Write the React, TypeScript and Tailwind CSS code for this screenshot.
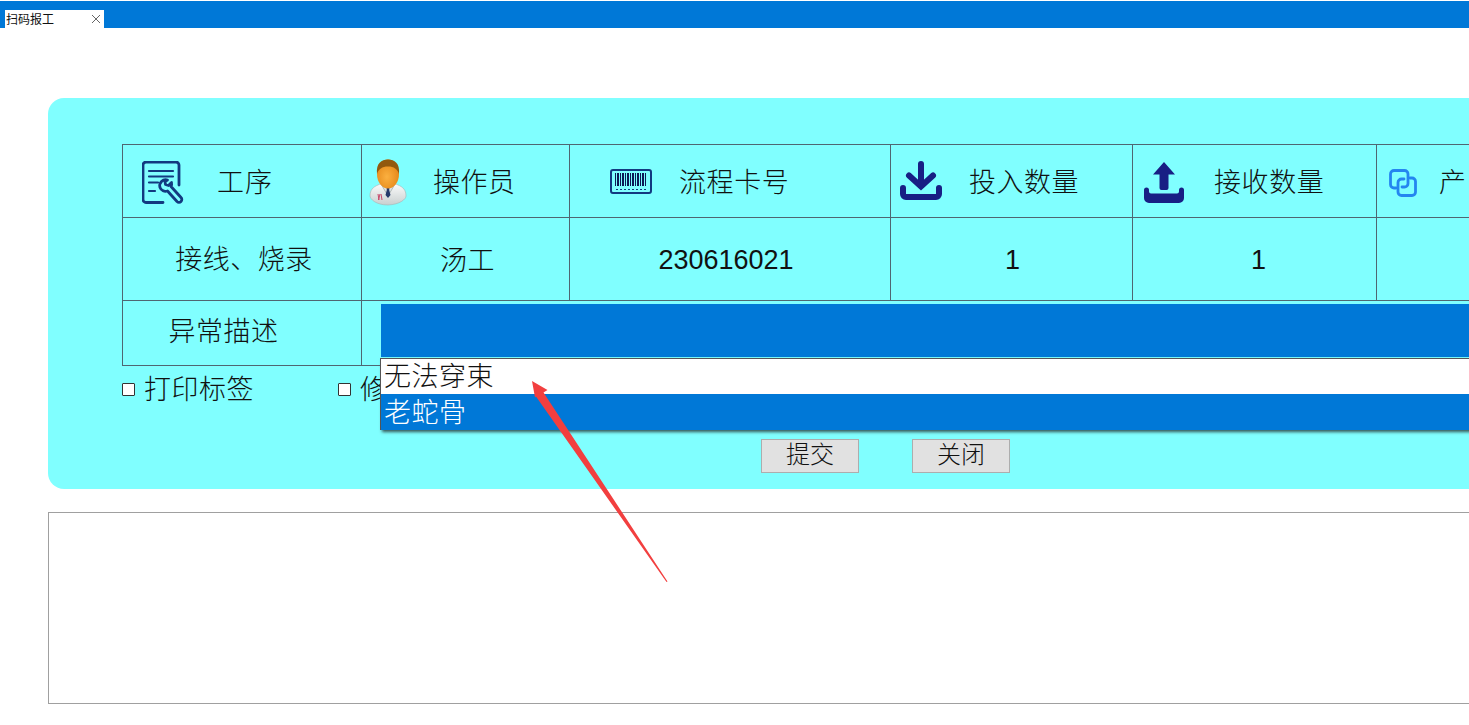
const cjk = "font-['Noto_Sans_CJK_SC','Liberation_Sans',sans-serif]";

function WrenchDocIcon() {
  return (
    <svg width="42" height="44" viewBox="0 0 42 44" fill="none" stroke="#123a80" strokeWidth="2.800" strokeLinecap="round" strokeLinejoin="round">
      <path d="M21 41.500H4a3 3 0 0 1-3-3V4a3 3 0 0 1 3-3h30a3 3 0 0 1 3 3v20" />
      <path d="M7 10h24M7 15.500h24M7 21.500h9M7 30h6" strokeWidth="2.200" />
      <path d="M25.500 19a6 6 0 0 0-7.500 7.500 6 6 0 0 0 7.500 3.500L35 40.500a2.800 2.800 0 0 0 4-4L29 25.500a6 6 0 0 0 .5-4l-3 3-3-1-.5-3z" />
    </svg>
  );
}

function DoctorIcon() {
  return (
    <svg width="40" height="47" viewBox="0 0 40 47">
      <defs>
        <radialGradient id="skin" cx="0.45" cy="0.6" r="0.7">
          <stop offset="0" stopColor="#fbb040" />
          <stop offset="1" stopColor="#e07f10" />
        </radialGradient>
        <linearGradient id="coat" x1="0" y1="0" x2="0" y2="1">
          <stop offset="0" stopColor="#ffffff" />
          <stop offset="1" stopColor="#c9cfcf" />
        </linearGradient>
      </defs>
      <path d="M2 37c0-6 3-9 8-11l6-3h8l6 3c5 2 8 5 8 11 0 3-6 8.500-18 9C8 46 2 40 2 37z" fill="url(#coat)" stroke="#a9b1b1" strokeWidth="0.600" />
      <path d="M13 25l7 12 7-12-7-2z" fill="#dfe5e5" stroke="#8b9696" strokeWidth="0.600" />
      <path d="M18.500 28h3l-.3 3 1.300 5-2.500 3-2.500-3 1.300-5z" fill="#253a6b" />
      <path d="M10 35l1 6M12 35l-1.500 6M13 35l1 6" stroke="#c8486a" strokeWidth="1" />
      <ellipse cx="20" cy="15" rx="11" ry="14.500" fill="url(#skin)" />
      <path d="M9 15C8 4 13.500 .5 20 .5S32 4 31 15C29.500 10 26 7.500 20 7.500S10.500 10 9 15z" fill="#92590f" />
    </svg>
  );
}

function BarcodeIcon() {
  const bars = [0, 2, 3, 5, 7, 8, 10, 12, 13, 15, 17, 18, 20, 22, 23, 25, 27, 28, 30];
  return (
    <svg width="42" height="25" viewBox="0 0 42 25" fill="none" shapeRendering="crispEdges">
      <rect x="1" y="1" width="40" height="23" rx="2" stroke="#123a80" strokeWidth="2" shapeRendering="auto" />
      {bars.map((x) => (
        <rect key={x} x={5 + x} y="4" width="1" height="13" fill="#0d1a55" />
      ))}
      <path d="M6 20h30" stroke="#123a80" strokeWidth="1" strokeDasharray="2 2" />
    </svg>
  );
}

function DownloadIcon() {
  return (
    <svg width="42" height="40" viewBox="0 0 42 40" fill="none" stroke="#181f84" strokeLinecap="round">
      <path d="M21 3v22M9 14.500l12 11 12-11" strokeWidth="6" strokeLinejoin="miter" />
      <path d="M3 27v6a3 3 0 0 0 3 3h30a3 3 0 0 0 3-3v-6" strokeWidth="6" />
    </svg>
  );
}

function UploadIcon() {
  return (
    <svg width="40" height="41" viewBox="0 0 40 41" fill="#181f84">
      <path d="M20 0l11 12.500h-6.500V26a2 2 0 0 1-2 2h-5a2 2 0 0 1-2-2V12.500H9z" />
      <path d="M0 28a2.500 2.500 0 0 1 5 0l0 1.500q0 2 2 2h26q2 0 2-2V28a2.500 2.500 0 0 1 5 0v8a5 5 0 0 1-5 5H5a5 5 0 0 1-5-5z" />
    </svg>
  );
}

function LinkSquaresIcon() {
  return (
    <svg width="28" height="28" viewBox="0 0 28 28" fill="none" stroke="#2486f0" strokeWidth="2.800" strokeLinecap="round" strokeLinejoin="round">
      <path d="M7 19H5a3.500 3.500 0 0 1-3.500-3.500V5A3.500 3.500 0 0 1 5 1.500h10.500A3.500 3.500 0 0 1 19 5v9.500a3.500 3.500 0 0 1-3.500 3.500h-2.500" />
      <path d="M21 9h2a3.500 3.500 0 0 1 3.500 3.500V23a3.500 3.500 0 0 1-3.500 3.500H12.500A3.500 3.500 0 0 1 9 23v-9.500A3.500 3.500 0 0 1 12.500 10H15" />
    </svg>
  );
}

function Cell({ className, children }: { className?: string; children?: React.ReactNode }) {
  return <div className={`border-l border-t border-[#4f6672] flex items-center ${className ?? ""}`}>{children}</div>;
}

function CheckItem({ label, className }: { label: string; className?: string }) {
  return (
    <div className={`flex items-center ${className ?? ""}`}>
      <span className="w-[13px] h-[13px] bg-white border border-[#333] rounded-[1px]" />
      <span className="ml-[9px] pb-[4px] tracking-[0.5px]">{label}</span>
    </div>
  );
}

export default function App() {
  return (
    <div className={`relative w-[1469px] h-[725px] overflow-hidden bg-white text-[#111] font-light ${cjk}`}>
      {/* tab bar */}
      <div className="mt-px h-[27px] bg-[#0078d7] flex items-end pl-[3px]">
        <div className="w-[101px] h-[18px] bg-white border-l-2 border-[#0078d7] flex items-center justify-between pr-[3px] text-[12px] leading-none font-normal">
          <span className="ml-px">扫码报工</span>
          <svg width="10" height="10" viewBox="0 0 10 10" stroke="#555" strokeWidth="0.900">
            <path d="M1 1l8 8M9 1l-8 8" />
          </svg>
        </div>
      </div>

      {/* main panel */}
      <div className="mt-[70px] ml-[48px] w-[1600px] h-[391px] rounded-[16px] bg-[#80ffff] pt-[46px] pl-[74px] text-[27px] leading-none">
        <div className="grid grid-cols-[239px_208px_321px_242px_244px_1fr] grid-rows-[73px_83px_65px] border-b border-[#4f6672]">
          <Cell className="pl-[19px] pt-[3px]">
            <WrenchDocIcon />
            <span className="ml-[33px] pb-[4px] tracking-[1px]">工序</span>
          </Cell>
          <Cell className="pl-[6px] pt-[3px]">
            <DoctorIcon />
            <span className="ml-[25px] pb-[4px] tracking-[0.5px]">操作员</span>
          </Cell>
          <Cell className="pl-[40px] pt-[3px]">
            <div className="pb-[2px]"><BarcodeIcon /></div>
            <span className="ml-[27px] pb-[4px] tracking-[0.6px]">流程卡号</span>
          </Cell>
          <Cell className="pl-[9px]">
            <DownloadIcon />
            <span className="ml-[27px] pb-[1px] tracking-[0.5px]">投入数量</span>
          </Cell>
          <Cell className="pl-[11px] pt-[3px]">
            <UploadIcon />
            <span className="ml-[30px] pb-[4px] tracking-[0.6px]">接收数量</span>
          </Cell>
          <Cell className="pl-[12px] pt-[3px]">
            <LinkSquaresIcon />
            <span className="ml-[22px] pb-[4px]">产</span>
          </Cell>

          <Cell className="justify-center pl-[4px]">
            <span className="pb-[4px] tracking-[0.5px]">接线、烧录</span>
          </Cell>
          <Cell className="justify-center pl-[4px]">
            <span className="pb-[2px] tracking-[0.5px]">汤工</span>
          </Cell>
          <Cell className="justify-center pr-[8px] pt-[2px] font-['Liberation_Sans',sans-serif] font-normal">230616021</Cell>
          <Cell className="justify-center pl-[2px] pt-[2px] font-['Liberation_Sans',sans-serif] font-normal">1</Cell>
          <Cell className="justify-center pl-[8px] pt-[2px] font-['Liberation_Sans',sans-serif] font-normal">1</Cell>
          <Cell />

          <Cell className="justify-center pr-[37px]">
            <span className="pb-[7px] tracking-[0.5px]">异常描述</span>
          </Cell>
          <Cell className="col-span-5 relative items-start pl-[19px] pt-[3px]">
            <div className="w-full h-[53px] bg-[#0078d7]" />
            {/* open select list */}
            <div className="absolute left-[18px] top-[57px] w-[1300px] border-t border-l border-[#555] shadow-[2px_2px_3px_rgba(30,30,30,0.75)] tracking-[0.5px]">
              <div className="h-[35px] bg-white flex items-center pl-[3px] pb-[4px]">无法穿束</div>
              <div className="h-[36px] bg-[#0078d7] text-white flex items-center pl-[3px] pb-[4px]">老蛇骨</div>
            </div>
          </Cell>
        </div>

        <div className="mt-[9px] h-[28px] flex items-center">
          <CheckItem label="打印标签" />
          <CheckItem label="修" className="ml-[84px]" />
        </div>

        <div className="mt-[36px] pl-[639px] flex gap-[53px] text-[24px]">
          <button className="w-[98px] h-[34px] pb-[7px] bg-[#e1e1e1] border border-[#adadad] text-center leading-none">提交</button>
          <button className="w-[98px] h-[34px] pb-[7px] bg-[#e1e1e1] border border-[#adadad] text-center leading-none">关闭</button>
        </div>
      </div>

      {/* log box */}
      <div className="mt-[23px] ml-[48px] w-[1600px] h-[192px] bg-white border border-[#a0a0a0]" />

      {/* red annotation arrow */}
      <svg className="absolute left-0 top-0 pointer-events-none" width="1469" height="725">
        <path d="M532 381L547.500 390L543.500 392.500L667.500 581.500L666.500 582L536 396.500L535 397.500z" fill="#f23f3f" />
      </svg>
    </div>
  );
}
